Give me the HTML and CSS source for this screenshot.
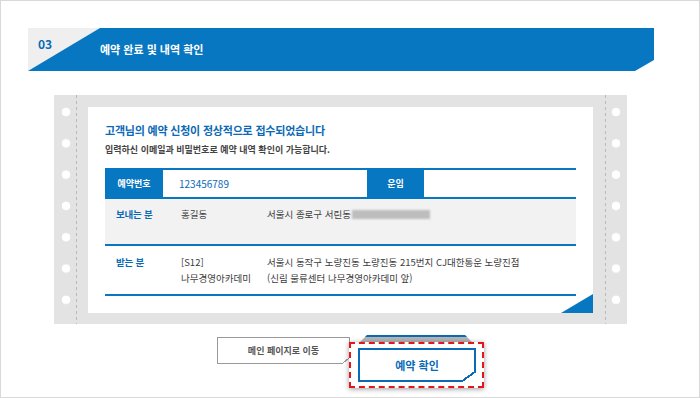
FILE: index.html
```html
<!DOCTYPE html>
<html lang="ko">
<head>
  <meta charset="UTF-8">
  <meta name="viewport" content="width=device-width, initial-scale=1.0">
  <title>예약 완료 및 내역 확인</title>
  <link rel="stylesheet" href="styles.css">
</head>
<body>
  <div class="frame">
    <div class="step">
      <span class="step-num">03</span>
      <h2 class="step-bar">예약 완료 및 내역 확인</h2>
    </div>

    <div class="paper">
      <div class="perf perf-left"></div>
      <div class="ticket">
        <h3 class="ticket-title">고객님의 예약 신청이 정상적으로 접수되었습니다</h3>
        <p class="ticket-desc">입력하신 이메일과 비밀번호로 예약 내역 확인이 가능합니다.</p>
        <div class="info">
          <div class="info-head">
            <span class="info-th">예약번호</span>
            <span class="info-no">123456789</span>
            <span class="info-th info-th-fee">운임</span>
            <span class="info-fee"></span>
          </div>
          <div class="info-row info-row-sender">
            <span class="info-label">보내는 분</span>
            <span class="info-name">홍길동</span>
            <span class="info-addr">서울시 종로구 서린동<span class="masked"></span></span>
          </div>
          <div class="info-row">
            <span class="info-label">받는 분</span>
            <span class="info-name">[S12]<br>나무경영아카데미</span>
            <span class="info-addr">서울시 동작구 노량진동 노량진동 215번지 CJ대한통운 노량진점<br>(신림 물류센터 나무경영아카데미 앞)</span>
          </div>
        </div>
        <div class="corner"></div>
      </div>
      <div class="perf perf-right"></div>
    </div>

    <div class="actions">
      <a class="btn-main" href="#">메인 페이지로 이동</a>
      <div class="btn-wrap">
        <span class="btn-base"></span>
        <div class="highlight">
          <a class="btn-confirm" href="#">예약 확인</a>
        </div>
      </div>
    </div>
  </div>
</body>
</html>
```

FILE: styles.css
```css
body {
  margin: 0;
  font-family: "Noto Sans CJK KR", "Noto Sans", sans-serif;
  background: #fff;
}
.frame {
  width: 700px;
  height: 398px;
  box-sizing: border-box;
  border: 1px solid #d9d9d9;
  background: #fff;
  overflow: hidden;
}

/* step header */
.step {
  display: grid;
  width: 626px;
  height: 43px;
  margin: 27px 0 0 27px;
  background: linear-gradient(to right, #efefef 72px, transparent 72px);
}
.step > * {
  grid-area: 1 / 1;
}
.step-num {
  z-index: 1;
  align-self: start;
  padding: 9px 0 0 10px;
  font-size: 12px;
  line-height: 14px;
  font-weight: 700;
  color: #0a6ab6;
}
.step-bar {
  margin: 0;
  padding-left: 72px;
  background: #0877c2;
  clip-path: polygon(72px 0, 100% 0, 100% 32px, calc(100% - 19px) 100%, 0 100%);
  color: #fff;
  font-size: 11px;
  line-height: 43px;
  font-weight: 700;
}

/* printed ticket */
.paper {
  display: grid;
  grid-template-columns: 34px 505px 34px;
  width: 573px;
  margin: 24px 0 0 53px;
  background: #e3e3e3;
}
.perf-left {
  background:
    radial-gradient(circle at 12px 50%, #fff 4px, transparent 4.6px) 0 1.4px / 34px 31.3px repeat-y,
    repeating-linear-gradient(to bottom, #b8b8b8 0 3px, transparent 3px 6px) 22px 0 / 1px 100% no-repeat;
}
.perf-right {
  background:
    radial-gradient(circle at 23px 50%, #fff 4px, transparent 4.6px) 0 1.4px / 34px 31.3px repeat-y,
    repeating-linear-gradient(to bottom, #b8b8b8 0 3px, transparent 3px 6px) 12px 0 / 1px 100% no-repeat;
}
.ticket {
  display: flex;
  flex-direction: column;
  margin: 12px 0 11px;
  padding: 14px 17px 0;
  background: #fff;
}
.ticket-title {
  margin: 0;
  font-size: 11px;
  line-height: 18px;
  font-weight: 700;
  color: #0b69b5;
  letter-spacing: -0.2px;
}
.ticket-desc {
  margin: 4px 0 0;
  font-size: 9px;
  line-height: 14px;
  font-weight: 700;
  color: #444;
}
.info {
  margin-top: 11px;
}
.info-head {
  display: flex;
  height: 27px;
  border-top: 2px solid #0877c2;
  border-bottom: 2px solid #0877c2;
  line-height: 27px;
}
.info-th {
  width: 58px;
  background: #0877c2;
  color: #fff;
  font-size: 9px;
  font-weight: 700;
  text-align: center;
}
.info-th-fee {
  width: 57px;
}
.info-no {
  width: 188px;
  padding-left: 16px;
  color: #0b69b5;
  font-size: 10px;
}
.info-row {
  display: grid;
  grid-template-columns: 58px 104px 1fr;
  padding: 8px 0;
  border-bottom: 2px solid #0877c2;
  font-size: 9.5px;
  line-height: 16px;
  color: #3c3c3c;
}
.info-row-sender {
  padding: 7px 0 22px;
  background: #f2f2f2;
}
.info-label {
  padding-left: 11px;
  color: #0b69b5;
  font-weight: 700;
  letter-spacing: -0.2px;
}
.info-name {
  padding-left: 18px;
}
.masked {
  display: inline-block;
  width: 78px;
  height: 9px;
  margin-left: 1px;
  vertical-align: -1px;
  background: #bdbdbd;
  filter: blur(0.8px);
}
.corner {
  align-self: flex-end;
  width: 32px;
  height: 19px;
  margin: -2px -17px 0 0;
  background: #0877c2;
  clip-path: polygon(100% 0, 100% 100%, 0 100%);
}

/* buttons */
.actions {
  display: flex;
  align-items: flex-start;
  gap: 9px;
  margin-top: 11px;
  padding-left: 216px;
}
.btn-main {
  position: relative;
  box-sizing: border-box;
  width: 133px;
  height: 27px;
  margin-top: 2px;
  border: 1px solid #999;
  background: #fff;
  color: #555;
  font-size: 9px;
  line-height: 25px;
  font-weight: 700;
  text-align: center;
  text-decoration: none;
}
.btn-main::after {
  content: '';
  position: absolute;
  right: -1px;
  bottom: -1px;
  width: 8px;
  height: 7px;
  background: linear-gradient(to top left, #fff calc(50% - 0.5px), #999 calc(50% - 0.5px) calc(50% + 0.5px), transparent calc(50% + 0.5px));
}
.btn-wrap {
  position: relative;
}
.btn-base {
  display: block;
  box-sizing: border-box;
  width: 114px;
  height: 29px;
  border-top: 2px solid #0a6ab6;
  background: #b4b4b4;
  clip-path: polygon(8px 0, calc(100% - 8px) 0, 100% 8px, 100% 100%, 0 100%, 0 8px);
}
.highlight {
  position: absolute;
  left: -10px;
  top: 7px;
  box-sizing: border-box;
  width: 135px;
  height: 46px;
  padding: 4px 7px;
  border: 2px dashed #e3161b;
  background: #fff;
  box-shadow: 0 1px 5px rgba(0, 0, 0, 0.4);
}
.btn-confirm {
  position: relative;
  display: block;
  box-sizing: border-box;
  width: 118px;
  height: 34px;
  border: 2px solid #0a6ab6;
  color: #0a6ab6;
  font-size: 11px;
  line-height: 30px;
  font-weight: 700;
  text-align: center;
  text-decoration: none;
}
.btn-confirm::after {
  content: '';
  position: absolute;
  right: -2px;
  bottom: -2px;
  width: 15px;
  height: 11px;
  background: linear-gradient(to top left, #fff calc(50% - 1px), #0a6ab6 calc(50% - 1px) calc(50% + 1px), transparent calc(50% + 1px));
}
```
